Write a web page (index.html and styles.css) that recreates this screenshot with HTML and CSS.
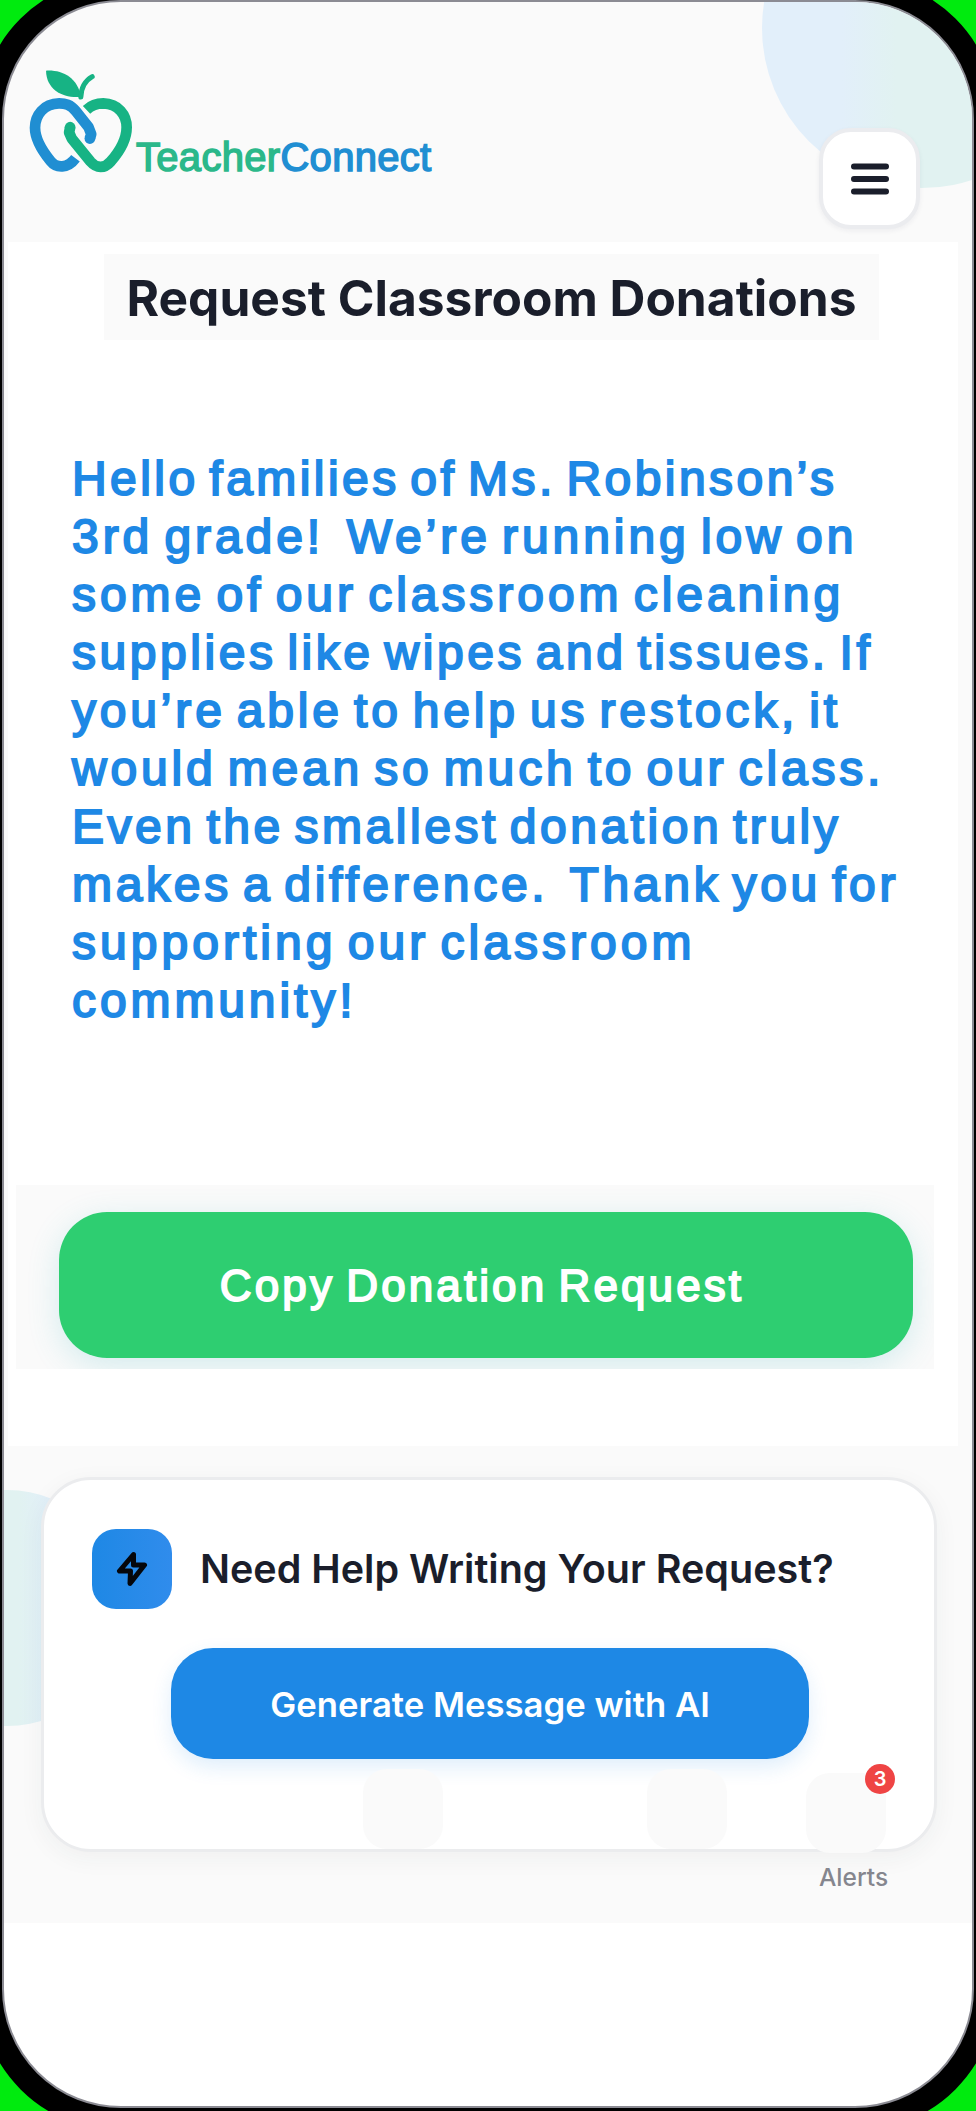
FILE: index.html
```
<!DOCTYPE html>
<html lang="en">
  <head>
    <meta charset="UTF-8" />
    <meta name="viewport" content="width=device-width, initial-scale=1.0" />
    <title>TeacherConnect</title>
    <link rel="stylesheet" href="styles.css">
  </head>

  <body>
    <div class="phone">
      <div class="screen">
        <div class="circle circle-top"></div>
        <div class="circle circle-left"></div>

        <header>
          <div class="logo">
            <svg class="apple" viewBox="80 205 320 320" fill="none" stroke-width="32">
              <path fill="#17b384" d="M137 213 C185 210 232 234 241 291 C190 296 138 272 137 213Z" />
              <path stroke="#17b384" stroke-width="15" stroke-linecap="round" d="M241 292 C242 264 254 243 275 231" />
              <path stroke="#208ed2" stroke-linejoin="round" d="M268 416 L272 403 L264 382 L226 334 C210 313 194 311 176 311 C130 312 104 346 104 384 C104 420 128 456 150 483 C168 506 202 506 225 475" />
              <circle cx="268" cy="416" r="16" fill="#208ed2" />
              <path stroke="#17b384" stroke-linejoin="round" d="M258 330 C275 314 293 311 308 311 C353 312 378 345 378 382 C378 420 352 460 330 485 C312 506 288 506 270 485 L214 416 L206 398 L209 382" />
              <circle cx="209" cy="382" r="16" fill="#17b384" />
            </svg>
            <span class="brand">Teacher<b>Connect</b></span>
          </div>
          <button class="menu">
            <svg viewBox="0 0 38 32" stroke="#1a1e2b" stroke-width="6" stroke-linecap="round">
              <path d="M3 3.500H35M3 16H35M3 28.500H35" />
            </svg>
          </button>
        </header>

        <main>
          <h1>Request Classroom Donations</h1>
          <p class="message">
            <span>Hello families of Ms. Robinson’s</span>
            <span>3rd grade!&nbsp; We’re running low on</span>
            <span>some of our classroom cleaning</span>
            <span>supplies like wipes and tissues. If</span>
            <span>you’re able to help us restock, it</span>
            <span>would mean so much to our class.</span>
            <span>Even the smallest donation truly</span>
            <span>makes a difference.&nbsp; Thank you for</span>
            <span>supporting our classroom</span>
            <span>community!</span>
          </p>
          <div class="copy-area">
            <button class="copy">Copy Donation Request</button>
          </div>
        </main>

        <section class="help">
          <article class="card">
            <div class="card-title">
              <div class="bolt">
                <svg viewBox="0 0 32 36" fill="none" stroke="#05070c" stroke-width="5" stroke-linejoin="round">
                  <path d="M17.500 3.500 L3.500 20 H14.500 L14 32.500 L28.500 14 H17.500 Z" />
                </svg>
              </div>
              <h2>Need Help Writing Your Request?</h2>
            </div>
            <button class="generate">Generate Message with AI</button>
          </article>
          <nav>
            <div class="tab"></div>
            <div class="tab"></div>
            <div class="tab alerts">
              <span class="badge">3</span>
              <span class="label">Alerts</span>
            </div>
          </nav>
        </section>
      </div>
    </div>
  </body>
</html>
```
FILE: styles.css
```
* {
  box-sizing: border-box;
}

body {
  margin: 0;
  height: 2111px;
  overflow: hidden;
  background-color: #00eb0e;
  font-family: Inter, "Liberation Sans", sans-serif;
}

h1,
h2,
p {
  margin: 0;
}

button {
  border: none;
  padding: 0;
  font-family: inherit;
}

/* the frame runs past the window on all sides */
.phone {
  width: 1018px;
  height: 2154px;
  margin: -23px 0 0 -21px;
  border: 23px solid #000;
  border-radius: 142px;
  background-color: #000;
}

.screen {
  position: relative;
  height: 2108px;
  border: 2px solid #8b8b93;
  border-radius: 119px;
  background: linear-gradient(#fafafa 1921px, white 1921px);
  overflow: hidden;
}

.circle {
  position: absolute;
  border-radius: 50%;
}

.circle-top {
  left: 758px;
  top: -134px;
  width: 320px;
  height: 320px;
  background: linear-gradient(90deg, #e2effa 25%, #e1f2f1 42%);
}

.circle-left {
  left: -115px;
  top: 1488px;
  width: 236px;
  height: 236px;
  background: linear-gradient(90deg, #e1f2f1 55%, #e2effa 70%);
}

header {
  display: flex;
  justify-content: space-between;
  height: 240px;
  padding: 66px 52px 0 23px;
}

.logo {
  display: flex;
  align-items: flex-start;
}

.apple {
  width: 107px;
  height: 107px;
}

.brand {
  position: relative;
  margin: 66px 0 0 2px;
  font: 40px/46px "Liberation Sans", sans-serif;
  letter-spacing: 0.3px;
  color: #2bb88a;
  -webkit-text-stroke: 1.5px;
}

.brand b {
  font-weight: normal;
  color: #208ed2;
}

.menu {
  position: relative;
  display: flex;
  align-items: center;
  justify-content: center;
  width: 101px;
  height: 101px;
  margin-top: 60px;
  border: 4px solid #ebecef;
  border-radius: 32px;
  background-color: white;
  box-shadow: 0 2px 5px rgba(30, 40, 60, 0.06);
}

.menu svg {
  width: 38px;
  height: 32px;
}

main {
  height: 1204px;
  margin: 0 14px 0 4px;
  padding-top: 12px;
  background-color: white;
}

h1 {
  width: 775px;
  height: 86px;
  margin-left: 96px;
  background-color: #fafafa;
  color: #1a1e2b;
  font-size: 49.7px;
  font-weight: 700;
  line-height: 89px;
  text-align: center;
}

.message {
  margin: 110px 0 0 64px;
  color: #1e88e5;
  font: 48px/58px "Liberation Sans", sans-serif;
  word-spacing: -6px;
  white-space: nowrap;
  -webkit-text-stroke: 2px;
}

.message span {
  display: block;
}

.message span:nth-child(1) { letter-spacing: 3.44px; }
.message span:nth-child(2) { letter-spacing: 3.93px; }
.message span:nth-child(3) { letter-spacing: 3.95px; }
.message span:nth-child(4) { letter-spacing: 3.55px; }
.message span:nth-child(5) { letter-spacing: 3.82px; }
.message span:nth-child(6) { letter-spacing: 3.83px; }
.message span:nth-child(7) { letter-spacing: 3.53px; }
.message span:nth-child(8) { letter-spacing: 3.7px; }
.message span:nth-child(9) { letter-spacing: 4.02px; }
.message span:nth-child(10) { letter-spacing: 3.9px; }

.copy-area {
  width: 918px;
  height: 184px;
  margin: 155px 0 0 8px;
  padding: 27px 20px 0 43px;
  background-color: #fafafa;
  overflow: hidden;
}

.copy {
  width: 854px;
  height: 146px;
  padding: 2px 8px 0 0;
  border-radius: 48px;
  background-color: #2ece71;
  box-shadow: 0 8px 32px rgba(60, 180, 190, 0.2);
  color: white;
  font: 44px "Liberation Sans", sans-serif;
  letter-spacing: 3.1px;
  word-spacing: -4px;
  -webkit-text-stroke: 1.8px;
}

.help {
  height: 478px;
  padding: 31px 0 0 37px;
}

.card {
  position: relative;
  width: 896px;
  height: 375px;
  padding: 49px 0 0 48px;
  border: 3px solid #ebecee;
  border-radius: 50px;
  background-color: white;
  box-shadow: 0 6px 24px rgba(30, 60, 60, 0.05);
}

.card-title {
  display: flex;
  align-items: center;
  gap: 28px;
}

.bolt {
  display: flex;
  align-items: center;
  justify-content: center;
  width: 80px;
  height: 80px;
  border-radius: 24px;
  background: linear-gradient(90deg, #1e88e5, #308cec);
}

.bolt svg {
  width: 32px;
  height: 36px;
}

h2 {
  color: #1a1e2b;
  font-size: 39.5px;
  font-weight: 600;
  white-space: nowrap;
}

.generate {
  width: 638px;
  height: 111px;
  margin: 39px 0 0 79px;
  border-radius: 42px;
  background-color: #1e88e5;
  box-shadow: 0 8px 20px rgba(30, 136, 229, 0.14);
  color: white;
  font-size: 34.7px;
  font-weight: 600;
}

/* the tab row lies over the lower edge of the card */
nav {
  position: relative;
  display: flex;
  margin: -83px 0 0 322px;
}

.tab {
  width: 80px;
  height: 80px;
  margin-right: 204px;
  border-radius: 24px;
  background-color: #fafafa;
}

.alerts {
  position: relative;
  margin: 4px 0 0 -125px;
}

.badge {
  position: absolute;
  left: 59px;
  top: -9px;
  width: 30px;
  height: 30px;
  border-radius: 50%;
  background-color: #ef4444;
  color: white;
  font-size: 20px;
  font-weight: 600;
  line-height: 31px;
  text-align: center;
}

.label {
  position: absolute;
  left: 13px;
  top: 89px;
  color: #85868e;
  font-size: 24.5px;
  font-weight: 500;
}
```
